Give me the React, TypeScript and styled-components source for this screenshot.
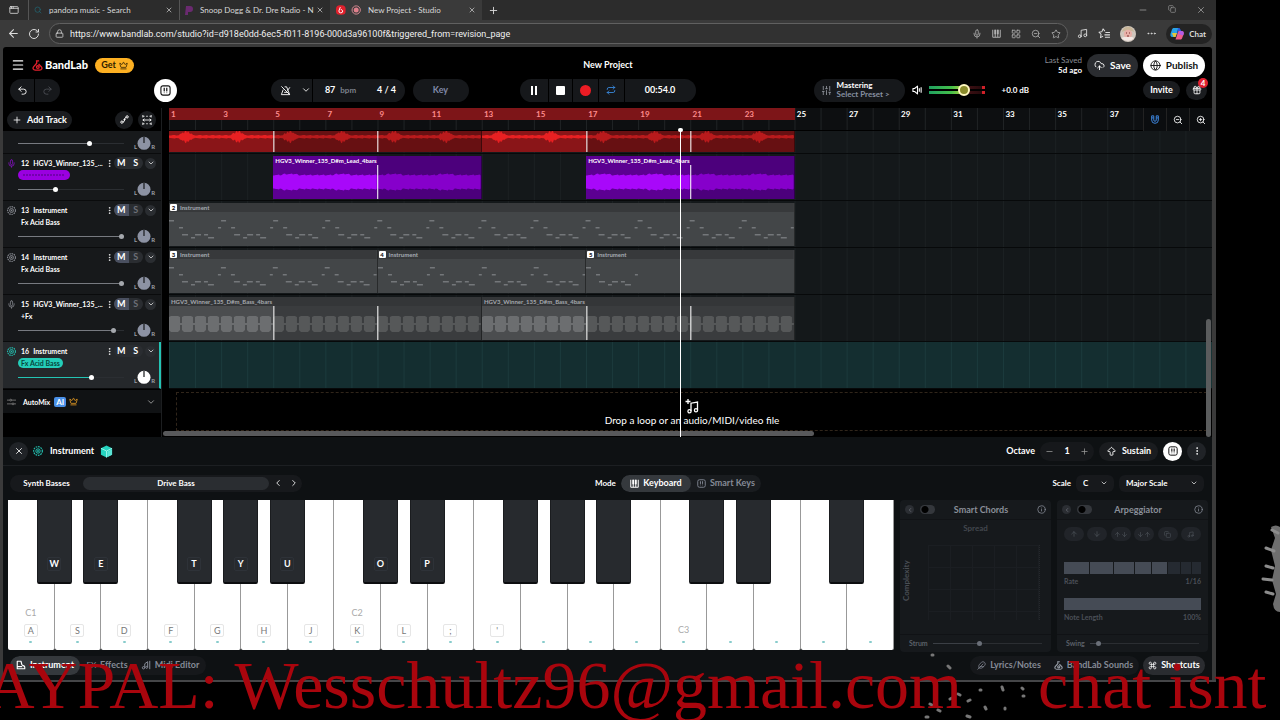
import React from "react";
import styled, { createGlobalStyle, css } from "styled-components";
import {
  AppWindow, ArrowBigUp, ArrowDown, ArrowLeft, ArrowUp, ChevronDown, ChevronLeft, ChevronRight,
  CloudUpload, Command, Copy, Crown, Ellipsis, EllipsisVertical, Feather, Gift, Globe, Info, LayoutGrid, Lock,
  Menu, Mic, Minus, Music, Plus, Redo2, Repeat, RotateCw, Search, SlidersVertical, Star,
  Undo2, X, ZoomIn, ZoomOut,
} from "lucide-react";

const Global = createGlobalStyle`
  * { box-sizing: border-box; }
  html, body { margin: 0; background: #000; }
  body { overflow: hidden; color: #fff; font-family: Lato, "Open Sans", sans-serif; font-size: 9px; line-height: 12px; font-weight: 700; }
  button, input, select { font: inherit; color: inherit; margin: 0; padding: 0; border: 0; background: none; }
  svg { flex: none; display: block; }
`;

/* ---------- browser frame ---------- */
const Desktop = styled.div`position: relative; min-height: 100vh; overflow: hidden;`;
const Window = styled.div`margin-right: 5%; background: #3a3a3a; border-bottom: 2px solid #454648;`;
const TabStrip = styled.div`
  display: flex; align-items: center; height: 20px; background: #2c2c2c; color: #d8d8d8;
  font-size: 8px; font-weight: 400;
`;
const TabMenu = styled.button`display: grid; place-items: center; width: 28px; height: 20px;`;
const Tab = styled.div<{ $w: number; $active?: boolean }>`
  display: flex; align-items: center; gap: 7px; width: ${(p) => p.$w}px; height: 20px; padding: 0 5px;
  border-left: 1px solid ${(p) => (p.$active ? "#3a3a3a" : "#555")};
  background: ${(p) => (p.$active ? "#3a3a3a" : "transparent")};
`;
const TabTitle = styled.span`flex: 1; min-width: 0; white-space: nowrap;`;
const TabClose = styled.button`display: grid; place-items: center; width: 10px; height: 12px;`;
const NewTab = styled(TabClose)`width: 22px;`;
const WinControls = styled.div`display: flex; gap: 20px; margin-left: auto; padding-right: 10px; color: #999;`;
const AddressRow = styled.div`display: flex; align-items: center; height: 27px; padding: 0 4px 0 7px; gap: 9px; color: #dcdcdc;`;
const NavButton = styled.button`display: grid; place-items: center; width: 12px; height: 16px;`;
const Address = styled.label`
  display: flex; align-items: center; flex: 1; height: 21px; gap: 6px; padding: 0 6px 0 5px; border-radius: 11px;
  border: 1px solid #606060; background: #313131;
`;
const UrlInput = styled.input`
  flex: 1; min-width: 0; outline: none; font-family: Roboto, "Open Sans", sans-serif; font-size: 9px; font-weight: 400; color: #f0f0f0;
`;
const AddressIcons = styled.div`display: flex; gap: 10px; color: #b0b0b0;`;
const BrowserIcons = styled.div`display: flex; align-items: center; gap: 10px;`;
const Chat = styled.button`
  display: flex; align-items: center; gap: 5px; height: 20px; padding: 0 6px 0 4px; border-radius: 10px;
  background: #232323; font-size: 8px;
`;

/* ---------- shared controls ---------- */
const Studio = styled.div`margin: 0 4px 0 3px; border-radius: 3px 3px 0 0; background: #000;`;
const Row = styled.div<{ $gap?: number }>`display: flex; align-items: center; gap: ${(p) => p.$gap ?? 0}px;`;
const Thirds = styled.div`display: grid; grid-template-columns: minmax(0, 1fr) auto minmax(0, 1fr); align-items: center;`;
const Pill = styled.div<{ $h?: number; $w?: number }>`
  display: flex; align-items: center; height: ${(p) => p.$h ?? 23}px; ${(p) => p.$w && `width: ${p.$w}px;`}
  border-radius: 12px; background: #16181b; overflow: hidden;
`;
const PillButton = styled.button<{ $w?: number; $line?: boolean; $dim?: boolean }>`
  display: flex; align-items: center; justify-content: center; gap: 5px; height: 100%;
  width: ${(p) => (p.$w ? `${p.$w}px` : "auto")}; color: ${(p) => (p.$dim ? "#4b4e54" : "#fff")};
  ${(p) => p.$line && "border-right: 1px solid #000;"}
`;
const Solid = styled.button<{ $w: number; $h?: number; $tone?: "white" | "gold" | "grey" | "dark" }>`
  display: flex; align-items: center; justify-content: center; gap: 5px; flex: none; white-space: nowrap;
  width: ${(p) => p.$w}px; height: ${(p) => p.$h ?? 23}px; border-radius: 12px; font-size: 10px;
  ${(p) => {
    switch (p.$tone) {
      case "white": return css`background: #fff; color: #111;`;
      case "gold": return css`background: #fdb022; color: #2b1c00; gap: 3px; font-size: 9px;`;
      case "dark": return css`background: #1a1c1f; font-size: 9px;`;
      default: return css`background: #2a2c30;`;
    }
  }}
`;

/* ---------- studio header ---------- */
const Header = styled(Thirds)`height: 31px; padding: 5px 7px 0 8px;`;
const Brand = styled.a`display: flex; align-items: center; gap: 2px; color: #fff; text-decoration: none; font-size: 11px; font-weight: 900;`;
const Title = styled.h1`margin: 0; font-size: 9px; line-height: 12px;`;
const Saved = styled.div`text-align: right; font-size: 8px; line-height: 10px; span { display: block; color: #8a8d95; font-weight: 400; }`;
const HeaderEnd = styled(Row)`justify-content: flex-end;`;

const Toolbar = styled(Thirds)`height: 24px; margin-bottom: 6px;`;
const ToolLeft = styled(Row)`justify-content: space-between; padding: 0 51px 0 7px;`;
const ToolRight = styled(Row)`justify-content: space-between; padding: 0 5px 0 118px;`;
const Unit = styled.span`color: #7d828c; font-size: 8px;`;
const KeyName = styled.span`color: #8088a8;`;
const Gain = styled.span`margin-left: 10px; font-size: 8px;`;
const Mastering = styled.button`
  display: flex; align-items: center; gap: 5px; width: 91px; height: 23px; padding: 0 7px; border-radius: 12px;
  background: #16181b; text-align: left; font-size: 8px; line-height: 9px; span { display: block; color: #8790a0; }
`;
const Meter = styled.label`
  position: relative; display: flex; flex-direction: column; justify-content: center; gap: 2px; width: 56px; height: 14px;
  &::before, &::after {
    content: ""; height: 3px; background: linear-gradient(90deg, #20a060, #45c04a 40%, #c9d63a 66%, #401014 68%, #250a0c 94%, #d02028 95%);
  }
`;
const MeterInput = styled.input`
  position: absolute; inset: 0; width: 100%; height: 14px; appearance: none; background: none;
  &::-webkit-slider-thumb { appearance: none; width: 12px; height: 12px; border-radius: 50%; border: 2px solid #fff8c0; background: #8a8a2a; }
`;
const GiftWrap = styled.div`position: relative;`;
const Count = styled.span`
  position: absolute; top: -3px; right: -1px; width: 10px; height: 10px; border-radius: 50%; background: #e02030;
  font-size: 8px; line-height: 10px; text-align: center;
`;

/* ---------- track list ---------- */
const Main = styled.div`display: grid; grid-template-columns: 159px minmax(0, 1fr);`;
const TrackPane = styled.div`border-right: 1px solid #1c1e20;`;
const TrackTop = styled.div`display: flex; align-items: center; gap: 5px; height: 23px; padding: 0 5px 0 4px;`;
const AddTrack = styled(Solid)`margin-right: auto; font-size: 9px;`;
const Track = styled.div<{ $on?: boolean }>`
  height: 47px; padding: 2px 5px 0 4px; background: ${(p) => (p.$on ? "#25282b" : "#17191b")};
  border-bottom: 1px solid #0a0b0c; ${(p) => p.$on && "border-right: 2px solid #24c4b4; padding-right: 3px;"}
`;
const TrackTail = styled(Track)`height: 23px; padding-top: 3px;`;
const TrackHead = styled.div`display: flex; align-items: center; height: 14px;`;
const TrackIcon = styled.span<{ $c: string }>`display: grid; width: 14px; color: ${(p) => p.$c};`;
const TrackName = styled.span`display: flex; flex: 1; min-width: 0; gap: 4px; font-size: 7px; white-space: nowrap;`;
const Dots = styled.button`display: grid; place-items: center; width: 10px; height: 12px;`;
const MuteSolo = styled.div<{ $muted?: boolean }>`
  display: flex; width: 29px; height: 12px; margin-right: 2px; border-radius: 6px; background: #2a2d31; overflow: hidden;
  button { flex: 1; font-size: 9px; line-height: 12px; }
  ${(p) => p.$muted && css`button:first-child { background: #4a5060; } button:last-child { color: #6d7077; }`}
`;
const Expand = styled.button`display: grid; place-items: center; width: 11px; height: 11px; border-radius: 50%; background: #2a2d31;`;
const FxTag = styled.button<{ $tone?: string }>`
  display: block; height: 10px; margin-left: 11px; padding: 0 3px; border-radius: 5px; font-size: 7px; line-height: 9px;
  ${(p) => p.$tone === "teal" && "background: #24cdb8; color: #07443d;"}
  ${(p) => p.$tone === "violet" && "background: #9a00e0; width: 52px; display: flex; align-items: center; justify-content: center;"}
`;
const VolumeRow = styled.div`display: flex; align-items: center; justify-content: space-between; height: 18px; padding-left: 11px;`;
const Range = styled.input<{ $v: number; $c?: string; $thumb?: string; $w?: number }>`
  appearance: none; height: 12px; width: ${(p) => (p.$w ? `${p.$w}px` : "100%")}; min-width: 0;
  background: linear-gradient(90deg, ${(p) => p.$c ?? "#777a80"} ${(p) => p.$v}%, #2b2e32 ${(p) => p.$v}%) center / 100% 1px no-repeat;
  &::-webkit-slider-thumb { appearance: none; width: 5px; height: 5px; border-radius: 50%; background: ${(p) => p.$thumb ?? "#fff"}; }
`;
const Knob = styled.div`display: flex; align-items: flex-end; margin-right: 1px; font-size: 6px; line-height: 7px; color: #9a9da3;`;
const AutoMix = styled.div`display: flex; align-items: center; height: 23px; padding: 0 5px 0 4px; background: #101214; font-size: 7px;`;
const AutoMixName = styled.span`margin-left: 2px;`;
const Badge = styled.span`margin: 0 3px 0 4px; padding: 0 2px; border-radius: 2px; background: #4a90e8; font-size: 8px; line-height: 10px;`;
const AutoMixArea = styled.div`height: 48px; padding-top: 1px;`;
const Push = styled.div`margin-left: auto;`;

/* ---------- timeline ---------- */
const Timeline = styled.div`position: relative; padding-left: 7px; min-width: 0; overflow: hidden;`;
const bars = "display: grid; grid-template-columns: repeat(40, minmax(0, 1fr));";
const gridLines = (c: string) => `background-image: linear-gradient(90deg, ${c} 1px, transparent 1px); background-size: 2.5% 100%;`;
const Ruler = styled.div`${bars} height: 23px; background-color: #0d0f11; ${gridLines("#202325")} border-bottom: 1px solid #000;`;
const RulerMark = styled.span<{ $loop: boolean }>`
  grid-column: span 2; height: 12px; padding-left: 2px; font-size: 8px; line-height: 12px;
  background: ${(p) => (p.$loop ? "#7d1518" : "transparent")}; color: ${(p) => (p.$loop ? "#ff8c8c" : "#fff")};
`;
const Lane = styled.div<{ $h?: number; $on?: boolean }>`
  ${bars} height: ${(p) => p.$h ?? 47}px; padding: ${(p) => (p.$h ? 0 : 2)}px 0 1px;
  background-color: ${(p) => (p.$on ? "#142e30" : "#14181a")};
  ${(p) => gridLines(p.$on ? "#1b3a3c" : "#1b2022")}
  border-bottom: 1px solid #07090a;
`;
const ClipBox = styled.div<{ $start: number; $len: number; $bg: string }>`
  position: relative; grid-column: ${(p) => p.$start} / span ${(p) => p.$len}; min-width: 0; overflow: hidden;
  background: ${(p) => p.$bg}; border-right: 1px solid #0006;
  > svg { width: 100%; height: 100%; }
`;
const ClipLabel = styled.span<{ $c: string }>`
  position: absolute; inset: 0 auto auto 0; display: flex; gap: 3px; padding-left: 2px; color: ${(p) => p.$c};
  font-size: 6px; line-height: 9px; white-space: nowrap;
  b { width: 7px; height: 7px; margin: 1px 0 0 -1px; border-radius: 1px; background: #fff; color: #111; text-align: center; line-height: 7px; }
`;
const Snap = styled.div`
  position: absolute; top: 0; right: 0; display: flex; height: 23px; background: #0b0d0f;
  button { display: grid; place-items: center; width: 23px; border-left: 1px solid #222; }
`;
const DropZone = styled.div`
  display: flex; flex-direction: column; align-items: center; height: 39px; margin: 3px 5px 0 7px; padding-top: 6px;
  border: 1px dashed #30251a; border-right: 0; font-size: 10px; line-height: 12px; font-weight: 400;
`;
const Playhead = styled.div`
  position: absolute; left: 49.3%; top: 21px; bottom: 0; width: 1px; background: #fff;
  &::before { content: ""; position: absolute; left: -2px; top: -1px; width: 5px; height: 4px; border-radius: 2px; background: #fff; }
`;
const ScrollX = styled.div`position: absolute; left: 1px; bottom: 1px; width: 62%; height: 5px; border-radius: 3px; background: #58595b;`;
const ScrollY = styled.div`position: absolute; right: 1px; bottom: 0; width: 5px; height: 118px; border-radius: 3px; background: #5a5c5d;`;

/* ---------- instrument panel ---------- */
const Panel = styled.section`background: #0e1113;`;
const PanelHead = styled.div`display: flex; align-items: center; gap: 5px; height: 29px; padding: 0 6px; border-bottom: 1px solid #1c1f22;`;
const Round = styled.button<{ $white?: boolean }>`
  display: grid; place-items: center; width: 19px; height: 19px; border-radius: 50%;
  background: ${(p) => (p.$white ? "#fff" : "#202327")}; color: ${(p) => (p.$white ? "#111" : "#fff")};
`;
const PanelTitle = styled.h2`margin: 0 3px 0 0; font-size: 9px; line-height: 12px;`;
const PresetRow = styled.div`display: flex; align-items: center; height: 34px; padding: 0 8px 0 7px; font-size: 8px;`;
const PresetCell = styled.div`flex: 0 0 49%;`;
const Preset = styled(Pill)`width: 292px; height: 17px; font-size: 8px; background: #17191c;`;
const PresetName = styled.button`flex: 1; height: 13px; border-radius: 7px; background: #2a2d31; font-size: 8px; line-height: 12px;`;
const Modes = styled(Pill)`margin-left: 5px; height: 17px; background: #191c1f; font-size: 9px;`;
const Mode = styled.button<{ $on?: boolean; $w: number }>`
  display: flex; align-items: center; justify-content: center; gap: 4px; width: ${(p) => p.$w}px; height: 17px; border-radius: 9px;
  white-space: nowrap; background: ${(p) => (p.$on ? "#35393d" : "transparent")}; color: ${(p) => (p.$on ? "#fff" : "#858a96")};
`;
const SelectWrap = styled.label<{ $w: number }>`
  position: relative; display: flex; align-items: center; width: ${(p) => p.$w}px; height: 17px; margin-left: 5px; border-radius: 6px; background: #17191c;
  select { width: 100%; height: 17px; padding-left: 7px; appearance: none; outline: none; font-size: 8px; }
  svg { position: absolute; right: 6px; pointer-events: none; }
`;
const Deck = styled.div`display: grid; grid-template-columns: minmax(0, 1fr) 151px 151px; gap: 6px; height: 150px; padding: 0 4px 0 5px;`;
const Keys = styled.div`display: flex;`;
const KeySlot = styled.div`position: relative; flex: 1; display: flex;`;
const White = styled.button`
  flex: 1; display: flex; flex-direction: column; align-items: center; justify-content: flex-end; height: 150px; padding-bottom: 7px;
  background: #fff; color: #777; border-right: 1px solid #999; border-radius: 0 0 2px 2px; font-weight: 400;
`;
const NoteName = styled.span`color: #aaa; line-height: 12px; margin-bottom: 5px;`;
const KeyCap = styled.span`width: 14px; height: 13px; margin-bottom: 4px; border: 1px solid #e6e6e6; border-radius: 2px; line-height: 11px;`;
const KeyDot = styled.span`width: 3px; height: 2px; border-radius: 1px; background: #8cc;`;
const Black = styled.button`
  position: absolute; z-index: 1; top: 0; right: -17px; width: 35px; height: 84px; padding-top: 46px;
  border: 1px solid #1a1c1f; border-top: 0; border-bottom: 2px solid #0c0d0f; border-radius: 0 0 2px 2px; background: #272a2e; color: #fff; font-size: 9px;
`;
const BlackCap = styled.span`display: block; width: 14px; height: 14px; margin: 0 auto; border: 1px solid #2e3238; border-radius: 2px;`;
const Card = styled.div`display: flex; flex-direction: column; border-radius: 4px; background: #16191c; color: #5b6068; font-size: 7px;`;
const CardHead = styled.div`display: flex; align-items: center; gap: 6px; height: 20px; padding: 0 5px; border-bottom: 1px solid #111316; color: #8a8f99;`;
const CardTitle = styled.h3`flex: 1; margin: 0; padding-right: 10px; text-align: center; font-size: 9px; line-height: 12px;`;
const Back = styled.button`display: grid; place-items: center; width: 9px; height: 9px; border-radius: 50%; background: #2b2e33;`;
const Switch = styled.input`
  appearance: none; width: 15px; height: 9px; border-radius: 5px;
  background: radial-gradient(circle at 5px 50%, #000 3px, #34373c 4px);
`;
const Pad = styled.div`flex: 1; display: grid; grid-template: 14px 1fr / 16px 1fr; padding: 2px 0 8px; text-align: center; font-size: 8px;`;
const PadTop = styled.span`grid-column: 1 / -1; color: #43474e;`;
const PadSide = styled.span`writing-mode: vertical-rl; transform: rotate(180deg); color: #4a4e55;`;
const PadGrid = styled.div`
  margin: 9px 11px 6px 12px;
  background-image: linear-gradient(90deg, #1b1e22 1px, transparent 1px), linear-gradient(#1b1e22 1px, transparent 1px);
  background-size: 22px 22px; border-right: 1px dotted #25282c;
`;
const CardFoot = styled.label`display: flex; align-items: center; gap: 5px; height: 18px; padding: 0 9px 1px; border-top: 1px solid #101215;`;
const ArpBody = styled.div`flex: 1; padding: 7px 7px 0;`;
const ArpModes = styled.div`display: flex; justify-content: space-between; margin-bottom: 21px;`;
const ArpMode = styled.button`display: flex; align-items: center; justify-content: center; width: 20px; height: 14px; border-radius: 7px; background: #212429; color: #4f545c;`;
const RateBar = styled.div`display: flex; gap: 1px; height: 12px;`;
const RateStep = styled.span<{ $w: number; $on?: boolean }>`flex: ${(p) => p.$w}; background: ${(p) => (p.$on ? "#454b55" : "#252a31")};`;
const ArpLabel = styled.div`display: flex; justify-content: space-between; margin: 1px 0 11px; line-height: 12px; color: #4b5058;`;
const Footer = styled.div`display: flex; align-items: center; justify-content: space-between; height: 30px; padding: 0 7px;`;
const FootTab = styled(Mode)`height: 19px; border-radius: 10px;`;
const FxMark = styled.span`font-size: 8px; font-weight: 400;`;
const FootText = styled.span`display: flex; align-items: center; gap: 4px; font-size: 9px; line-height: 12px;`;

/* ---------- stream overlay ---------- */
const Ticker = styled.p`
  position: absolute; z-index: 5; left: -46px; top: 650px; display: flex; gap: 76px; margin: 0; white-space: nowrap; pointer-events: none;
  font: 400 68px/70px "Liberation Serif", serif; color: #a9050d;
`;
const Specks = styled.svg`position: absolute; right: 0; top: 500px;`;

const PadIcon = ({ s = 10 }: { s?: number }) => (
  <svg width={s} height={s} viewBox="0 0 12 12" fill="none" stroke="currentColor" strokeWidth="1.2">
    <rect x="1" y="1" width="10" height="10" rx="2.2" /><path d="M4.6 3v3.5M7.4 3v3.5" strokeWidth="1.3" /><path d="M4.6 6.5V9M7.4 6.5V9" strokeWidth=".5" />
  </svg>
);
const KeysIcon = () => (
  <svg width="9" height="9" viewBox="0 0 12 12" fill="none" stroke="currentColor" strokeWidth="1.3">
    <path d="M1 1v10h10V1M4.3 1v10M7.7 1v10" /><path d="M4.3 1v6M7.7 1v6" strokeWidth="2.4" />
  </svg>
);
const Flask = ({ s = 11, c = "#e2202c" }: { s?: number; c?: string }) => (
  <svg width={s} height={s} viewBox="0 0 14 14" fill="none" stroke={c} strokeWidth="1.7" strokeLinejoin="round">
    <path d="M5 1.2h4M6 1.4v2.8L2.2 8.5c-1.8 2.2-.5 4.3 1.9 4.3h5.8c2.4 0 3.7-2.1 1.9-4.3L8.4 5" />
    <circle cx="7.4" cy="9" r="1.7" />
  </svg>
);
const Ring = ({ s = 9 }: { s?: number }) => (
  <svg width={s} height={s} viewBox="0 0 12 12" fill="none" stroke="currentColor">
    <circle cx="6" cy="6" r="5.2" strokeDasharray="2 1" strokeWidth="1.4" /><circle cx="6" cy="6" r="2.6" strokeWidth="1.2" />
    <circle cx="6" cy="6" r=".7" fill="currentColor" />
  </svg>
);
const Metronome = () => (
  <svg width="11" height="11" viewBox="0 0 12 12" fill="none" stroke="currentColor" strokeWidth="1" strokeLinejoin="round">
    <path d="M5 2h2.2l3.300 8.500h-9L3.500 5M1.500 1.500l9 9M4.500 8h4M8 6.200l2.800-3.700" />
  </svg>
);
const Curve = () => (
  <svg width="9" height="9" viewBox="0 0 12 12" fill="none" stroke="currentColor" strokeWidth="1.3">
    <circle cx="2.500" cy="9.500" r="1.500" /><circle cx="9.500" cy="2.500" r="1.500" /><path d="M4 9.500c3 0 1-5.500 4-6.500" /><circle cx="6" cy="6" r=".8" fill="currentColor" />
  </svg>
);
const FitIcon = () => (
  <svg width="10" height="10" viewBox="0 0 12 12" fill="none" stroke="currentColor" strokeWidth="1">
    <path d="M1 0v3M11 0v3M1 1.500h2M5 1.500h2M9 1.500h2M1 9v3M11 9v3M1 10.500h2M5 10.500h2M9 10.500h2M1 6h10M3 4.500L1 6l2 1.500M9 4.500L11 6 9 7.500" />
  </svg>
);
const Speaker = () => (
  <svg width="11" height="10" viewBox="0 0 12 11" fill="none" stroke="currentColor" strokeWidth="1.200" strokeLinejoin="round">
    <path d="M1 3.800h1.800L6 1.200v8.600L2.800 7.200H1zM8 3.500v4M10 2.500v6" />
  </svg>
);
const SnapIcon = () => (
  <svg width="10" height="10" viewBox="0 0 12 12" fill="none" stroke="#3b82d8" strokeWidth="1.200">
    <path d="M2 1h2.500v5a1.500 1.500 0 003 0V1H10v5a4 4 0 01-8 0zM2 3.500h2.500M7.500 3.500H10" />
  </svg>
);
const TrackFile = () => (
  <svg width="10" height="10" viewBox="0 0 12 12" fill="none" stroke="currentColor" strokeWidth="1.400" strokeLinejoin="round">
    <path d="M1.500 1.500H6L7 5.500c.500 1.500 3.500 1 3.500 3v2h-9zM1.500 8h6" />
  </svg>
);
const MidiIcon = () => (
  <svg width="10" height="10" viewBox="0 0 12 12" fill="none" stroke="currentColor" strokeWidth="1.200">
    <path d="M4.500 9V4.500L8 2v6.500M10.500 1v10" /><circle cx="3" cy="9.300" r="1.400" /><circle cx="6.800" cy="8.800" r="1.200" />
  </svg>
);
const MixIcon = () => (
  <svg width="9" height="8" viewBox="0 0 12 10" fill="none" stroke="currentColor" strokeWidth="1.200">
    <path d="M0 2.500h4M6 2.500h6M0 7.500h7M9 7.500h3" /><circle cx="5" cy="2.500" r="1.200" /><circle cx="8" cy="7.500" r="1.200" />
  </svg>
);
const FavIcon = () => (
  <svg width="12" height="11" viewBox="0 0 13 12" fill="none" stroke="currentColor" strokeWidth="1.100" strokeLinejoin="round">
    <path d="M7.500 3.500L5.500 1 4.200 4 1 4.500l2.300 2.300L2.700 10.500l2.800-1.600M8 5h5M7 7.500h6M7.500 10H13" />
  </svg>
);
const Copilot = () => (
  <svg width="14" height="13" viewBox="0 0 14 13">
    <path d="M4 1h4.500L5.500 10H2.500C.500 10 0 8.500.600 6.500L2 2.500C2.400 1.500 3 1 4 1z" fill="#29a3e8" />
    <path d="M2 6l1.500 4h2L7 6z" fill="#e7c63b" /><path d="M8 1h1.500l1.800 3H8.500L6.500 10 8 1z" fill="#2a5be0" />
    <path d="M8.500 4h3c2 0 2.600 1.400 2 3.400l-1.300 3.500c-.500 1.200-1 1.600-2 1.600H5.500z" fill="#ef5c8d" />
    <path d="M9.500 4h2c2 0 2.600 1.400 2 3.400L13 8.500 8.500 7z" fill="#b15be8" />
  </svg>
);
const Avatar = () => (
  <svg width="16" height="16" viewBox="0 0 16 16">
    <circle cx="8" cy="8" r="8" fill="#cfc6bd" /><path d="M2 6c1-7 11-7 12 0l-2-1H4z" fill="#c9b79a" />
    <circle cx="8" cy="8" r="4.200" fill="#e8b0a8" /><path d="M6 7h1M9 7h1M7 10h2" stroke="#7a3030" /><path d="M1 12c3 3 10 4 13 0l-2-1H4z" fill="#f4e8e4" />
  </svg>
);
const Cube = () => (
  <svg width="13" height="13" viewBox="0 0 14 14">
    <path d="M7 .5l6 3v7l-6 3-6-3v-7z" fill="#25d3bf" /><path d="M1 3.500l6 3 6-3M7 6.500v7" stroke="#9ff5ea" fill="none" />
    <path d="M8 7l5-2.500v6L8 13z" fill="#5be4d5" />
  </svg>
);
const AddMusic = () => (
  <svg width="14" height="15" viewBox="0 0 14 15" fill="none" stroke="#fff" strokeWidth="1.300">
    <path d="M3 0v5M.500 2.500h5M6 12V4.200L12.500 3v8" /><circle cx="4.500" cy="12.300" r="1.600" /><circle cx="11" cy="11.300" r="1.600" />
  </svg>
);

const Pan = ({ bright }: { bright?: boolean }) => (
  <Knob>
    L
    <svg width="14" height="14" viewBox="0 0 14 14">
      <circle cx="7" cy="7.300" r="6.500" fill={bright ? "#fff" : "#8c92a3"} /><path d="M7 1v6" stroke="#16181a" strokeWidth="1.200" />
    </svg>
    R
  </Knob>
);

type ClipKind = "red" | "violet" | "notes" | "grey";
const palette: Record<ClipKind, { hot: string; cold: string; waveHot: string; waveCold: string; label: string }> = {
  red: { hot: "#8a1518", cold: "#671012", waveHot: "#e82022", waveCold: "#b91a1c", label: "#fff" },
  violet: { hot: "#5c0092", cold: "#4c007c", waveHot: "#a808fa", waveCold: "#8600cb", label: "#fff" },
  grey: { hot: "#4b4d4f", cold: "#3a3c3e", waveHot: "#6c6e70", waveCold: "#565859", label: "#a4a8ad" },
  notes: { hot: "#434648", cold: "#434648", waveHot: "#85888a", waveCold: "#85888a", label: "#a4aab2" },
};
const NOTES: [number, number, number][] = [[0, 5, 17], [10, 4, 24], [13, 6, 31], [22, 4, 34], [26, 6, 31], [35, 4, 31], [39, 6, 34], [49, 3, 24]];

function wavePath(kind: ClipKind, from: number, to: number) {
  if (kind === "grey") {
    let d = "";
    for (let x = from; x < to; x += 13) d += `M${x} 20l2-1h7l2 1v13l-2 2h-7l-2-2z M${x + 11} 26h2v2h-2z`;
    return d;
  }
  const mid = kind === "red" ? 6 : 26;
  const top: string[] = [];
  const bottom: string[] = [];
  for (let x = from; x <= to; x += 1) {
    const near = Math.abs((x % 52) - 17);
    const noise = ((x * 7919) % 13) / 13;
    const a = kind === "red"
      ? 1.2 + noise * 0.8 + (near < 7 ? 1 + (6.5 - near) * (x % 3 === 0 ? 0.2 : 0.65) : 0)
      : 6.4 + noise * 1.2 + (near < 8 ? 1 : 0);
    top.push(`${x} ${(mid - a).toFixed(1)}`);
    bottom.unshift(`${x} ${(mid + a).toFixed(1)}`);
  }
  return `M${top.join("L")}L${bottom.join("L")}z`;
}

type ClipProps = { kind: ClipKind; start: number; len: number; label?: string; tag?: string; marks?: number[]; noteBars?: number };
function Clip({ kind, start, len, label, tag, marks = [], noteBars }: ClipProps) {
  const p = palette[kind];
  const w = len * 26;
  const h = kind === "red" ? 22 : 43;
  const hot = Math.min(104, w);
  return (
    <ClipBox $start={start} $len={len} $bg={p.cold}>
      <svg viewBox={`0 0 ${w} ${h}`} preserveAspectRatio="none" aria-hidden="true">
        {kind === "notes" ? (
          <>
            <rect width={w} height="9" fill="#37393b" />
            {Array.from({ length: Math.ceil((noteBars ?? len) / 2) }, (_, i) =>
              NOTES.map(([x, nw, y], j) => <rect key={`${i}-${j}`} x={i * 52 + x} y={y} width={nw} height="1.500" fill="#74777a" />))}
          </>
        ) : (
          <>
            <rect width={hot} height={h} fill={p.hot} />
            {kind === "grey" && <rect width={w} height="9" fill="#343638" />}
            <path d={wavePath(kind, 0, hot)} fill={p.waveHot} />
            <path d={wavePath(kind, hot, w)} fill={p.waveCold} />
          </>
        )}
        {marks.map((m) => <rect key={m} x={m * 26 + 0.2} y={kind === "red" ? 0 : 9} width="1.300" height="34" fill="#fffc" />)}
      </svg>
      {label && <ClipLabel $c={p.label}>{tag && <b>{tag}</b>}{label}</ClipLabel>}
    </ClipBox>
  );
}

type TrackInfo = { n: number; name: string; voice?: boolean; color: string; fx: string; tone?: string; vol: number; muted?: boolean; on?: boolean };
const tracks: TrackInfo[] = [
  { n: 12, name: "HGV3_Winner_135_...", voice: true, color: "#8a12c8", fx: "", tone: "violet", vol: 35 },
  { n: 13, name: "Instrument", color: "#8c8f96", fx: "Fx Acid Bass", vol: 100, muted: true },
  { n: 14, name: "Instrument", color: "#8c8f96", fx: "Fx Acid Bass", vol: 100, muted: true },
  { n: 15, name: "HGV3_Winner_135_...", voice: true, color: "#8c8f96", fx: "+Fx", vol: 92, muted: true },
  { n: 16, name: "Instrument", color: "#24c4b4", fx: "Fx Acid Bass", tone: "teal", vol: 70, on: true },
];

const whiteKeys = ["A", "S", "D", "F", "G", "H", "J", "K", "L", ";", "'", "", "", "", "", "", "", "", ""];
const blackKeys: Record<number, string> = { 0: "W", 1: "E", 3: "T", 4: "Y", 5: "U", 7: "O", 8: "P", 10: "", 11: "", 12: "", 14: "", 15: "", 17: "" };
const octaveNames: Record<number, string> = { 0: "C1", 7: "C2", 14: "C3" };

function Browser() {
  return (
    <>
      <TabStrip>
        <TabMenu aria-label="Tab actions"><AppWindow size={10} /></TabMenu>
        <Tab $w={151}><Search size={8} color="#1f6a78" /><TabTitle>pandora music - Search</TabTitle><TabClose aria-label="Close tab"><X size={8} /></TabClose></Tab>
        <Tab $w={151}><svg width="8" height="9" viewBox="0 0 8 9"><path d="M1 0h4a3 3 0 010 6H3v3H0z" fill="#6a2a70" /></svg><TabTitle>Snoop Dogg &amp; Dr. Dre Radio - N</TabTitle><TabClose aria-label="Close tab"><X size={8} /></TabClose></Tab>
        <Tab $w={152} $active>
          <svg width="25" height="10" viewBox="0 0 26 10">
            <rect width="10" height="10" rx="4" fill="#e2202c" /><path d="M4.500 2L3 6a2 2 0 104 0L5 4" stroke="#fff" fill="none" />
            <circle cx="21" cy="5" r="4.300" fill="none" stroke="#d98a94" /><circle cx="21" cy="5" r="2.600" fill="#e0808c" />
          </svg>
          <TabTitle>New Project - Studio</TabTitle><TabClose aria-label="Close tab"><X size={8} /></TabClose>
        </Tab>
        <NewTab aria-label="New tab"><Plus size={11} /></NewTab>
        <WinControls><Minus size={10} /><Copy size={8} /><X size={10} /></WinControls>
      </TabStrip>
      <AddressRow>
        <NavButton aria-label="Back"><ArrowLeft size={13} /></NavButton>
        <NavButton aria-label="Reload"><RotateCw size={12} /></NavButton>
        <Address>
          <Lock size={9} />
          <UrlInput aria-label="Address" defaultValue="https://www.bandlab.com/studio?id=d918e0dd-6ec5-f011-8196-000d3a96100f&triggered_from=revision_page" />
          <AddressIcons><Mic size={10} /><KeysIcon /><LayoutGrid size={10} /><ZoomOut size={10} /><Star size={10} /></AddressIcons>
        </Address>
        <BrowserIcons><Music size={11} /><FavIcon /><Avatar /><Ellipsis size={11} /></BrowserIcons>
        <Chat><Copilot />Chat</Chat>
      </AddressRow>
    </>
  );
}

function StudioTop() {
  return (
    <>
      <Header>
        <Row $gap={7}>
          <Menu size={14} />
          <Brand href="#home"><Flask />BandLab</Brand>
          <Solid $w={39} $h={15} $tone="gold">Get <Crown size={9} /></Solid>
        </Row>
        <Title>New Project</Title>
        <HeaderEnd $gap={5}>
          <Saved><span>Last Saved</span>5d ago</Saved>
          <Solid $w={51}><CloudUpload size={11} />Save</Solid>
          <Solid $w={62} $tone="white"><Globe size={11} />Publish</Solid>
        </HeaderEnd>
      </Header>
      <Toolbar>
        <ToolLeft>
          <Pill $w={50}>
            <PillButton $w={25} $line aria-label="Undo"><Undo2 size={11} /></PillButton>
            <PillButton $w={25} $dim aria-label="Redo"><Redo2 size={11} /></PillButton>
          </Pill>
          <Row $gap={94}>
            <Solid $w={23} $tone="white" aria-label="Live input"><PadIcon s={11} /></Solid>
            <Row $gap={8}>
              <Pill>
                <PillButton $w={30} aria-label="Metronome"><Metronome /></PillButton>
                <PillButton $w={12} $line aria-label="Metronome options"><ChevronDown size={10} /></PillButton>
                <PillButton $w={56}>87 <Unit>bpm</Unit></PillButton>
                <PillButton $w={36}>4 / 4</PillButton>
              </Pill>
              <Pill><PillButton $w={56}><KeyName>Key</KeyName></PillButton></Pill>
            </Row>
          </Row>
        </ToolLeft>
        <Pill>
          <PillButton $w={29} $line aria-label="Pause"><svg width="8" height="9"><path d="M1 0h2v9H1zM5 0h2v9H5z" fill="#fff" /></svg></PillButton>
          <PillButton $w={24} $line aria-label="Stop"><svg width="9" height="9"><rect width="9" height="9" rx="1" fill="#fff" /></svg></PillButton>
          <PillButton $w={26} $line aria-label="Record"><svg width="11" height="11"><circle cx="5.500" cy="5.500" r="5.500" fill="#ec1c24" /></svg></PillButton>
          <PillButton $w={26} $line aria-label="Loop"><Repeat size={10} color="#3b8fe8" /></PillButton>
          <PillButton $w={71}>00:54.0</PillButton>
        </Pill>
        <ToolRight>
          <Row $gap={7}>
            <Mastering><SlidersVertical size={11} color="#8a8d95" /><div>Mastering<span>Select Preset &gt;</span></div></Mastering>
            <Row $gap={6}><Speaker /><Meter><MeterInput type="range" defaultValue={68} aria-label="Master volume" /></Meter></Row>
            <Gain>+0.0 dB</Gain>
          </Row>
          <Row $gap={6}>
            <Solid $w={37} $h={18} $tone="dark">Invite</Solid>
            <GiftWrap><Solid $w={21} $h={19} $tone="dark" aria-label="Rewards"><Gift size={10} /></Solid><Count>4</Count></GiftWrap>
          </Row>
        </ToolRight>
      </Toolbar>
    </>
  );
}

function TrackList() {
  return (
    <TrackPane>
      <TrackTop>
        <AddTrack $w={65} $h={18} $tone="dark"><Plus size={10} />Add Track</AddTrack>
        <Solid $w={18} $h={18} $tone="dark" aria-label="Automation"><Curve /></Solid>
        <Solid $w={18} $h={18} $tone="dark" aria-label="Fit to screen"><FitIcon /></Solid>
      </TrackTop>
      <TrackTail><VolumeRow><Range type="range" aria-label="Volume" $w={106} $v={68} defaultValue={68} /><Pan /></VolumeRow></TrackTail>
      {tracks.map((t) => (
        <Track key={t.n} $on={t.on}>
          <TrackHead>
            <TrackIcon $c={t.color}>{t.voice ? <Mic size={9} /> : <Ring />}</TrackIcon>
            <TrackName><span>{t.n}</span><span>{t.name}</span></TrackName>
            <Dots aria-label="Track menu"><EllipsisVertical size={9} /></Dots>
            <MuteSolo $muted={t.muted}><button>M</button><button>S</button></MuteSolo>
            <Expand aria-label="Expand"><ChevronDown size={8} /></Expand>
          </TrackHead>
          <FxTag $tone={t.tone} aria-label="Effects">
            {t.fx || <svg width="42" height="4"><path d="M0 2h42" stroke="#7400b0" strokeWidth="2" strokeDasharray="2 1" /></svg>}
          </FxTag>
          <VolumeRow>
            <Range type="range" aria-label="Volume" $w={106} $v={t.vol} defaultValue={t.vol} $c={t.on ? "#24c4b4" : undefined} $thumb={t.muted ? "#a5a8ad" : undefined} />
            <Pan bright={t.on} />
          </VolumeRow>
        </Track>
      ))}
      <AutoMixArea>
        <AutoMix>
          <TrackIcon $c="#777"><MixIcon /></TrackIcon><AutoMixName>AutoMix</AutoMixName><Badge>AI</Badge><Crown size={9} color="#f5a524" />
          <Push><ChevronDown size={10} color="#aaa" /></Push>
        </AutoMix>
      </AutoMixArea>
    </TrackPane>
  );
}

function Arrangement() {
  return (
    <Timeline>
      <Ruler>{Array.from({ length: 19 }, (_, i) => <RulerMark key={i} $loop={i < 12}>{i * 2 + 1}</RulerMark>)}</Ruler>
      <Lane $h={23}>
        <Clip kind="red" start={1} len={12} marks={[4, 8]} />
        <Clip kind="red" start={13} len={12} marks={[4, 8]} />
      </Lane>
      <Lane>
        <Clip kind="violet" start={5} len={8} marks={[4]} label="HGV3_Winner_135_D#m_Lead_4bars" />
        <Clip kind="violet" start={17} len={8} marks={[4]} label="HGV3_Winner_135_D#m_Lead_4bars" />
      </Lane>
      <Lane><Clip kind="notes" start={1} len={24} tag="2" label="Instrument" /></Lane>
      <Lane>
        <Clip kind="notes" start={1} len={8} tag="3" label="Instrument" />
        <Clip kind="notes" start={9} len={8} tag="4" label="Instrument" />
        <Clip kind="notes" start={17} len={8} noteBars={2} tag="5" label="Instrument" />
      </Lane>
      <Lane>
        <Clip kind="grey" start={1} len={12} marks={[4, 8]} label="HGV3_Winner_135_D#m_Bass_4bars" />
        <Clip kind="grey" start={13} len={12} marks={[4, 8]} label="HGV3_Winner_135_D#m_Bass_4bars" />
      </Lane>
      <Lane $on />
      <DropZone><AddMusic />Drop a loop or an audio/MIDI/video file</DropZone>
      <ScrollX /><ScrollY />
      <Snap>
        <button aria-label="Snap"><SnapIcon /></button>
        <button aria-label="Zoom out"><ZoomOut size={10} /></button>
        <button aria-label="Zoom in"><ZoomIn size={10} /></button>
      </Snap>
      <Playhead />
    </Timeline>
  );
}

function Keyboard() {
  return (
    <Keys>
      {whiteKeys.map((k, i) => (
        <KeySlot key={i}>
          <White aria-label={`White key ${i + 1}`}>
            {octaveNames[i] && <NoteName>{octaveNames[i]}</NoteName>}
            {k && <KeyCap>{k}</KeyCap>}
            <KeyDot />
          </White>
          {i in blackKeys && <Black aria-label={`Black key after ${i + 1}`}>{blackKeys[i] && <BlackCap>{blackKeys[i]}</BlackCap>}</Black>}
        </KeySlot>
      ))}
    </Keys>
  );
}

function InstrumentPanel() {
  return (
    <Panel>
      <PanelHead>
        <Round aria-label="Close"><X size={10} /></Round>
        <Row $gap={3}><TrackIcon $c="#24c4b4"><Ring s={10} /></TrackIcon><PanelTitle>Instrument</PanelTitle><Cube /></Row>
        <Push>Octave</Push>
        <Pill $h={19}>
          <PillButton $w={19} aria-label="Octave down"><Minus size={9} color="#999" /></PillButton>
          <PillButton $w={16}>1</PillButton>
          <PillButton $w={19} aria-label="Octave up"><Plus size={9} color="#999" /></PillButton>
        </Pill>
        <Solid $w={59} $h={19} $tone="dark"><ArrowBigUp size={11} />Sustain</Solid>
        <Round $white aria-label="Keyboard view"><PadIcon s={10} /></Round>
        <Round aria-label="More"><EllipsisVertical size={10} /></Round>
      </PanelHead>
      <PresetRow>
        <PresetCell>
          <Preset>
            <PillButton $w={73}>Synth Basses</PillButton>
            <PresetName>Drive Bass</PresetName>
            <PillButton $w={17} aria-label="Previous"><ChevronLeft size={10} /></PillButton>
            <PillButton $w={16} aria-label="Next"><ChevronRight size={10} /></PillButton>
          </Preset>
        </PresetCell>
        Mode
        <Modes><Mode $on $w={70}><KeysIcon />Keyboard</Mode><Mode $w={70}><PadIcon s={9} />Smart Keys</Mode></Modes>
        <Push>
          <Row>
            <label htmlFor="scale">Scale</label>
            <SelectWrap $w={38}><select id="scale" defaultValue="C"><option>C</option></select><ChevronDown size={8} /></SelectWrap>
            <SelectWrap $w={85}><select aria-label="Scale type"><option>Major Scale</option></select><ChevronDown size={8} /></SelectWrap>
          </Row>
        </Push>
      </PresetRow>
      <Deck>
        <Keyboard />
        <Card>
          <CardHead><Back aria-label="Back"><ChevronLeft size={6} /></Back><Switch type="checkbox" aria-label="Smart Chords" /><CardTitle>Smart Chords</CardTitle><Info size={9} /></CardHead>
          <Pad><PadTop>Spread</PadTop><PadSide>Complexity</PadSide><PadGrid /></Pad>
          <CardFoot>Strum <Range type="range" $v={42} $c="#3b3f45" $thumb="#6a6f78" defaultValue={42} /></CardFoot>
        </Card>
        <Card>
          <CardHead><Back aria-label="Back"><ChevronLeft size={6} /></Back><Switch type="checkbox" aria-label="Arpeggiator" /><CardTitle>Arpeggiator</CardTitle><Info size={9} /></CardHead>
          <ArpBody>
            <ArpModes>
              <ArpMode aria-label="Up"><ArrowUp size={8} /></ArpMode>
              <ArpMode aria-label="Down"><ArrowDown size={8} /></ArpMode>
              <ArpMode aria-label="Up and down"><ArrowUp size={7} /><ArrowDown size={7} /></ArpMode>
              <ArpMode aria-label="Down and up"><ArrowDown size={7} /><ArrowUp size={7} /></ArpMode>
              <ArpMode aria-label="Random"><Copy size={7} /></ArpMode>
              <ArpMode aria-label="As played"><Music size={7} /></ArpMode>
            </ArpModes>
            <RateBar>{[26, 23, 21, 17, 15, 12, 11, 9].map((w, i) => <RateStep key={i} $w={w} $on={i < 5} />)}</RateBar>
            <ArpLabel><span>Rate</span><span>1/16</span></ArpLabel>
            <RateBar><RateStep $w={1} $on /></RateBar>
            <ArpLabel><span>Note Length</span><span>100%</span></ArpLabel>
          </ArpBody>
          <CardFoot>Swing <Range type="range" $v={6} $c="#3b3f45" $thumb="#6a6f78" defaultValue={6} /></CardFoot>
        </Card>
      </Deck>
      <Footer>
        <Pill $h={19}>
          <FootTab $on $w={70}><TrackFile />Instrument</FootTab>
          <FootTab $w={54}><FxMark>FX</FxMark>Effects</FootTab>
          <FootTab $w={72}><MidiIcon />Midi Editor</FootTab>
        </Pill>
        <Row $gap={4}>
          <Pill $h={19}><FootTab $w={78}><Feather size={9} />Lyrics/Notes</FootTab><FootTab $w={91}><Flask s={9} c="#9aa0aa" />BandLab Sounds</FootTab></Pill>
          <Solid $w={62} $h={19} $tone="grey"><FootText><Command size={9} />Shortcuts</FootText></Solid>
        </Row>
      </Footer>
    </Panel>
  );
}

export default function App() {
  return (
    <Desktop>
      <Global />
      <Window>
        <Browser />
        <Studio>
          <StudioTop />
          <Main><TrackList /><Arrangement /></Main>
          <InstrumentPanel />
        </Studio>
      </Window>
      <Specks width="360" height="220" viewBox="0 0 360 220" aria-hidden="true">
        <path d="M351 27q5-3 9 0v85q-6 0-7-8l3-10-4-14 3-14-4-16 4-12z" fill="#6e6e6e" />
        <path d="M352 30l6 3M346 48l8 3M346 66l7 2M343 79l9 1M346 92l7 2" stroke="#8c8c8c" strokeWidth="3" strokeLinecap="round" />
        <path d="M12 155h1M28 166l2 2M82 187l1 3M102 188l1 1M103 196h1M85 208v1M65 207l1 2M47 216l3 1M18 210l2 1M10 204l2 1M48 201l2-1M38 194l2 1M60 190h1M30 199l2-1M6 217h2" stroke="#777" strokeWidth="3" strokeLinecap="round" />
      </Specks>
      <Ticker><span>PAYPAL: Wesschultz96@gmail.com</span><span>chat isnt</span></Ticker>
    </Desktop>
  );
}
